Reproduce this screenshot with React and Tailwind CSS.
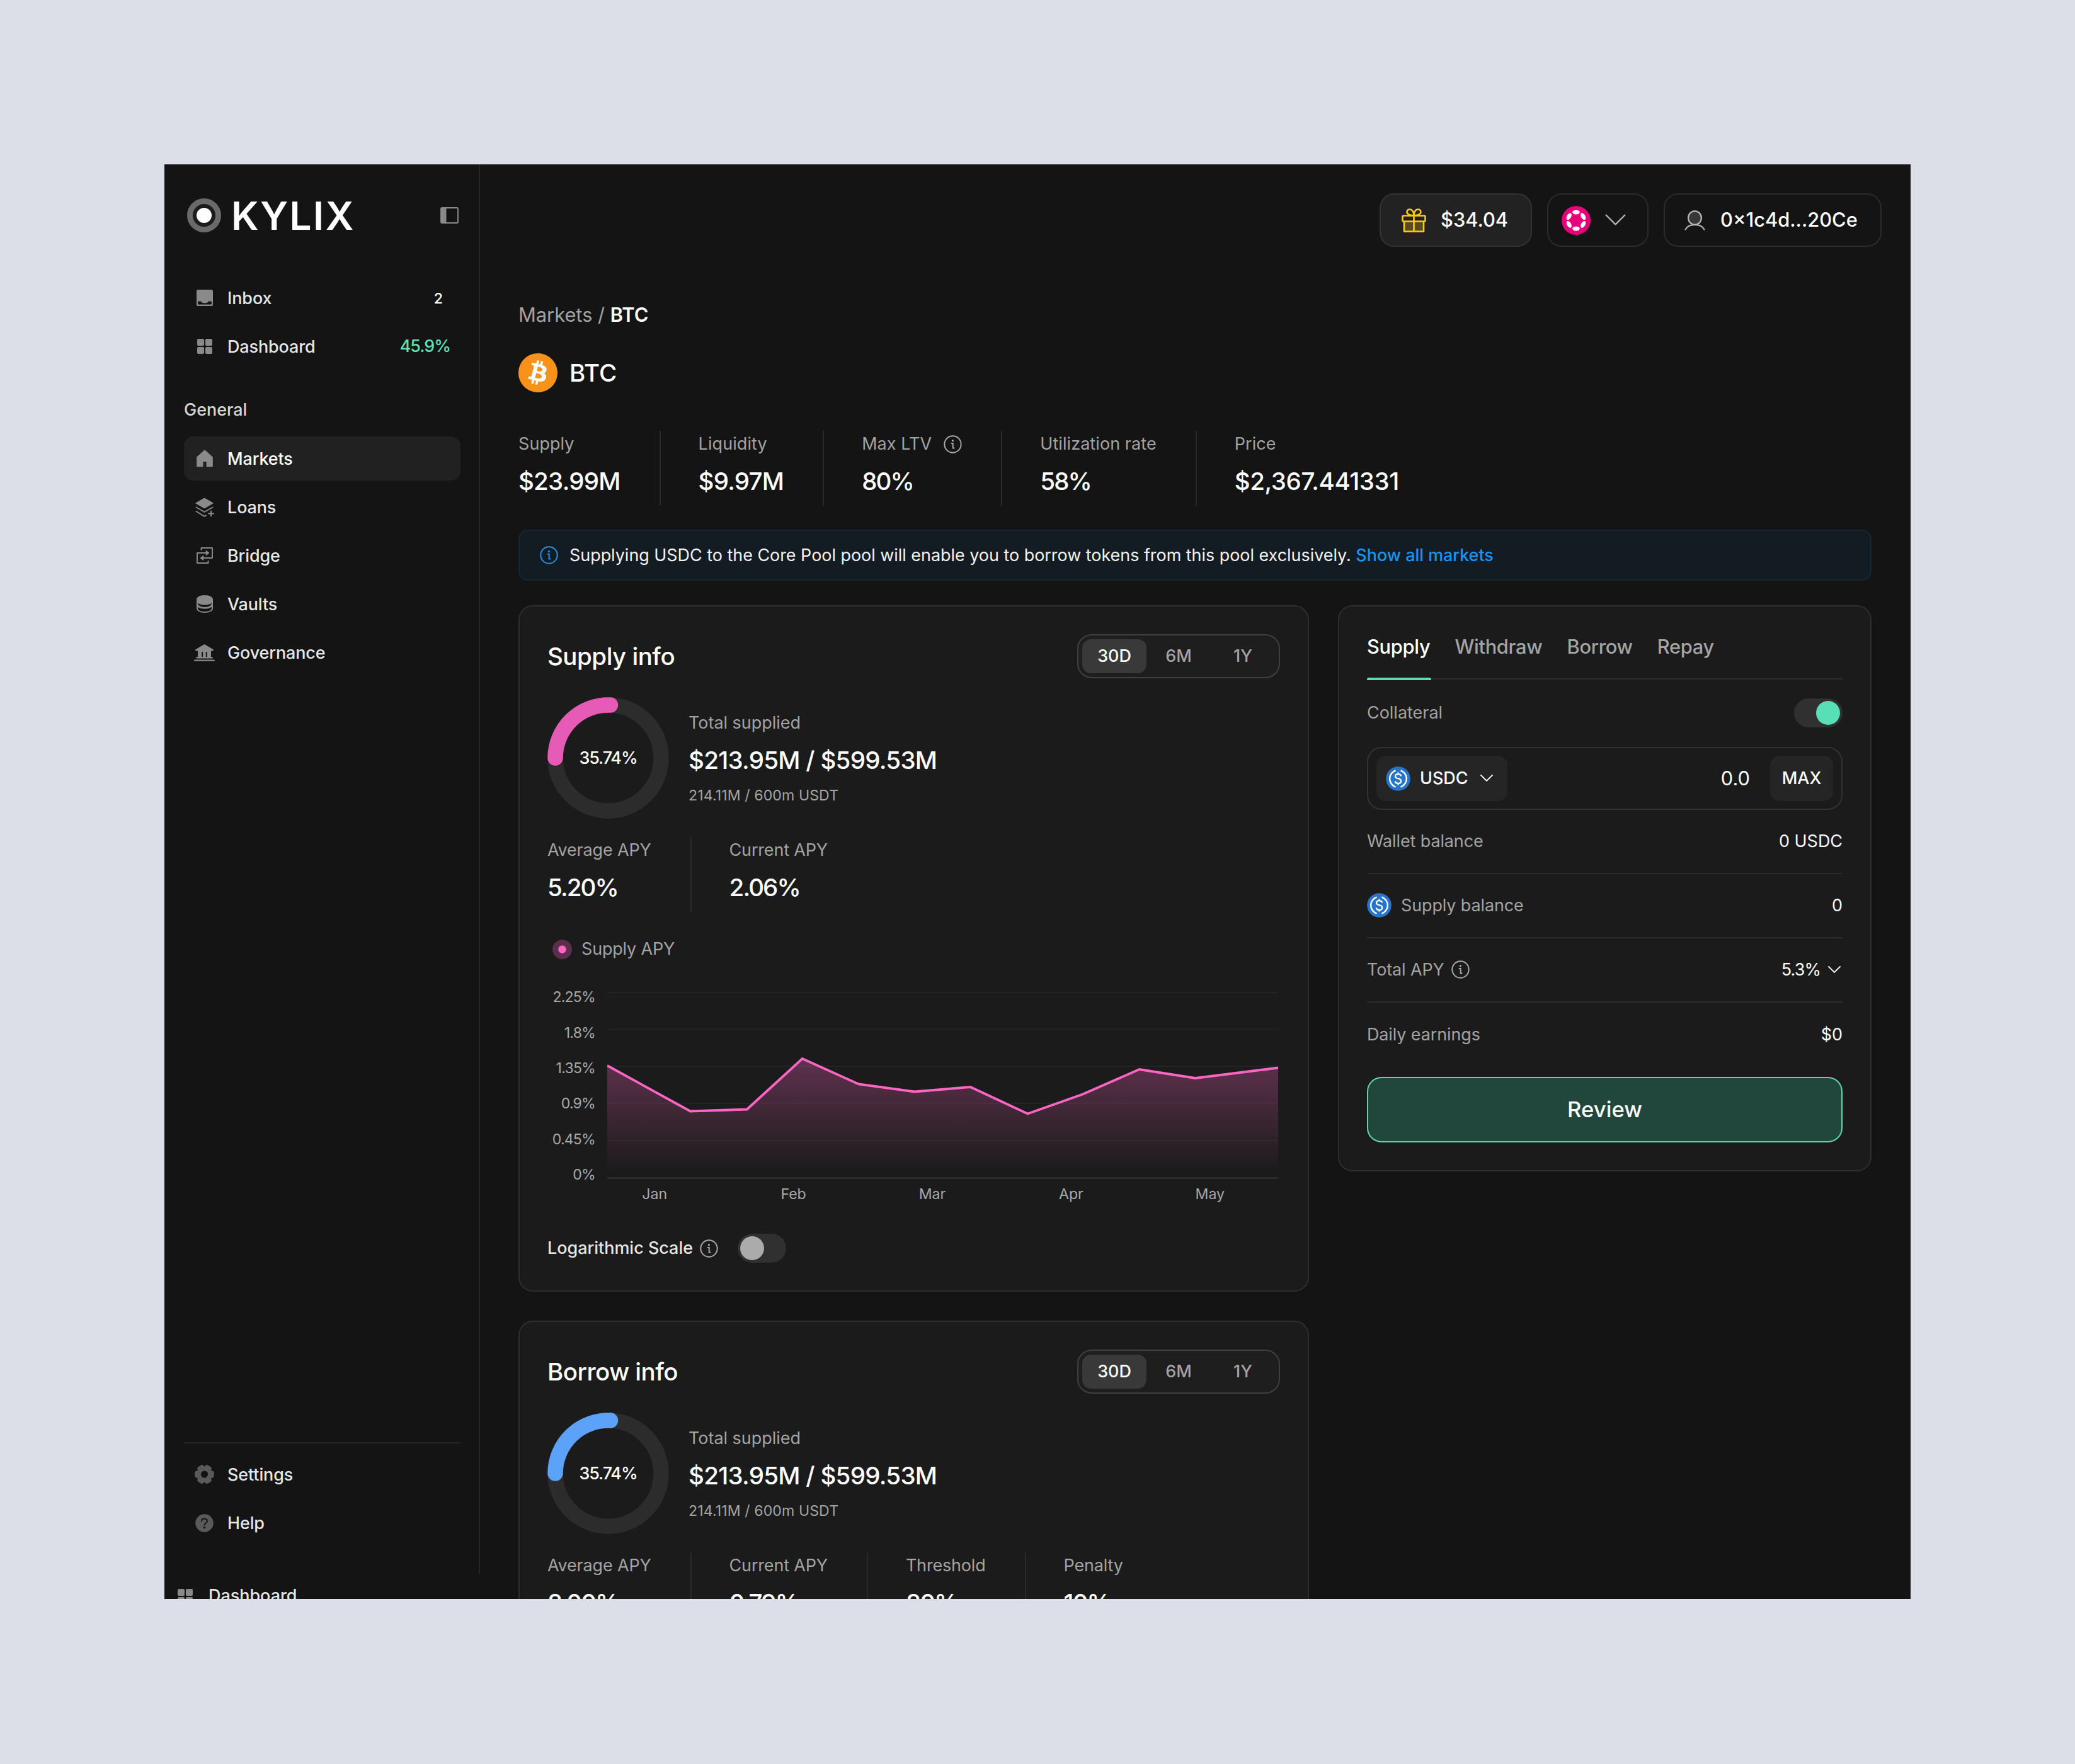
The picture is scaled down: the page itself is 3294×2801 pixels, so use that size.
import { useState } from 'react'
import { SiBitcoin } from 'react-icons/si'

const RANGES = ['30D', '6M', '1Y']

const TABS = ['Supply', 'Withdraw', 'Borrow', 'Repay']

const TOP_NAV = [
  { label: 'Inbox', icon: InboxIcon, extra: <span className="mr-[12px] text-[23.1px] text-white">2</span> },
  { label: 'Dashboard', icon: GridIcon, extra: <span className="tracking-[-1px] text-[#5fe0b7]">45.9%</span> },
]

const GENERAL_NAV = [
  { label: 'Markets', icon: HomeIcon, active: true },
  { label: 'Loans', icon: LayersIcon },
  { label: 'Bridge', icon: BridgeIcon },
  { label: 'Vaults', icon: VaultIcon },
  { label: 'Governance', icon: BankIcon },
]

const FOOTER_NAV = [
  { label: 'Settings', icon: GearIcon },
  { label: 'Help', icon: HelpIcon },
]

const MARKET_STATS = [
  { label: 'Supply', value: '$23.99M' },
  { label: 'Liquidity', value: '$9.97M' },
  { label: 'Max LTV', value: '80%', info: true },
  { label: 'Utilization rate', value: '58%' },
  { label: 'Price', value: '$2,367.441331' },
]

const SUPPLY_STATS = [
  { label: 'Average APY', value: '5.20%' },
  { label: 'Current APY', value: '2.06%' },
]

const BORROW_STATS = [
  { label: 'Average APY', value: '8.00%' },
  { label: 'Current APY', value: '0.79%' },
  { label: 'Threshold', value: '80%' },
  { label: 'Penalty', value: '10%' },
]

const Y_TICKS = ['2.25%', '1.8%', '1.35%', '0.9%', '0.45%', '0%']
const GRID_LINES = [1, 59.5, 118, 177, 236]
const MONTHS = ['Jan', 'Feb', 'Mar', 'Apr', 'May']

const APY_POINTS = [
  [0, 117], [132, 189.5], [222, 186.5], [310, 106], [399.5, 146.5], [488.5, 158.5],
  [577, 151], [668, 193.5], [755.5, 162.5], [845.5, 123], [934.5, 137], [1066, 120.5],
]

function InboxIcon() {
  return (
    <svg width="26" height="26" viewBox="0 0 26 26">
      <rect width="26" height="26" rx="2" fill="#8a8a8a" />
      <path d="M2.2 18.5H7C8 21 10 21.3 13 21.3S18 21 19 18.5H23.8V23.6H2.2Z" fill="#141414" />
    </svg>
  )
}

function GridIcon() {
  return (
    <svg width="24" height="24" viewBox="0 0 24 24" fill="#8a8a8a">
      <rect width="11" height="11" rx="2" />
      <rect x="13" width="11" height="11" rx="2" />
      <rect y="13" width="11" height="11" rx="2" />
      <rect x="13" y="13" width="11" height="11" rx="2" />
    </svg>
  )
}

function HomeIcon() {
  return (
    <svg width="28" height="28" viewBox="0 0 28 28">
      <path d="M14 1 26.2 12V26.6H17.200V18.4H10.800V26.6H1.8V12Z" fill="#8a8a8a" stroke="#8a8a8a" strokeWidth="1.2" strokeLinejoin="round" />
    </svg>
  )
}

function LayersIcon() {
  return (
    <svg width="30" height="31" viewBox="0 0 30 31" fill="none" stroke="#8a8a8a" strokeWidth="2" strokeLinecap="round" strokeLinejoin="round">
      <path d="M14.5 1.5 27.5 9 14.5 16.5 1.5 9Z" fill="#8a8a8a" />
      <path d="M1.5 15.5 14.5 23 27.5 15.5" />
      <path d="M1.5 22 14.5 29.8 17 28.5" />
      <path d="M25 21.5V29.5M21 25.5H29" />
    </svg>
  )
}

function BridgeIcon() {
  return (
    <svg width="26" height="26" viewBox="0 0 26 26" fill="none" stroke="#8a8a8a" strokeWidth="1.9" strokeLinecap="round" strokeLinejoin="round">
      <path d="M7.5 4V1H25V17H10" />
      <path d="M18.5 22V25H1V9H16" />
      <path d="M15.5 5.5 20 9 15.5 12.5ZM10.500 13.500 6 17 10.500 20.500Z" fill="#8a8a8a" strokeWidth="1" />
    </svg>
  )
}

function VaultIcon() {
  return (
    <svg width="26" height="28" viewBox="0 0 26 28">
      <path d="M0 7C0 3 5.500 0 13 0S26 3 26 7V21C26 25 20.500 28 13 28S0 25 0 21Z" fill="#8a8a8a" />
      <path d="M2 12.500C4 14.500 8 15.600 13 15.600S22 14.500 24 12.500C24 16.500 19.500 18.900 13 18.900S2 16.500 2 12.500Z" fill="#141414" />
      <path d="M2 18.500C4 20.600 8 21.700 13 21.700S22 20.600 24 18.500V21C24 24 19.500 26 13 26S2 24 2 21Z" fill="#141414" />
    </svg>
  )
}

function BankIcon() {
  return (
    <svg width="33" height="27" viewBox="0 0 33 27" fill="#8a8a8a">
      <path d="M16.500 0 31 8.500 30.500 10.500H27V20H29.500V22.500H3.500V20H6V10.500H2.500L2 8.500Z" />
      <path d="M12.200 12H14.200V20H12.200ZM18.800 12H20.800V20H18.800Z" fill="#141414" />
      <rect y="24.600" width="33" height="2.200" rx="1" />
    </svg>
  )
}

function GearIcon() {
  return (
    <svg width="31" height="30" viewBox="-15.500 -15 31 30">
      <g fill="#5a5a5a">
        <circle r="12.300" />
        {[0, 60, 120, 180, 240, 300].map(a => (
          <rect key={a} x="5" y="-5.800" width="10.300" height="11.600" rx="4" transform={`rotate(${a})`} />
        ))}
      </g>
      <circle r="5.600" fill="#141414" />
    </svg>
  )
}

function HelpIcon() {
  return (
    <svg width="29" height="29" viewBox="0 0 29 29" fill="none">
      <circle cx="14.500" cy="14.500" r="14.300" fill="#5a5a5a" />
      <path d="M10 11.800C10 9 12 7.500 14.500 7.500S19 9 19 11.500C19 14.500 14.500 14.500 14.500 17.600" stroke="#141414" strokeWidth="2" strokeLinecap="round" />
      <circle cx="14.500" cy="21.500" r="1.700" fill="#141414" />
    </svg>
  )
}

function PanelIcon() {
  return (
    <svg width="29" height="26" viewBox="0 0 29 26">
      <rect x="1" y="1" width="27" height="24" rx="1.500" fill="none" stroke="#8a8a8a" strokeWidth="1.900" />
      <rect x="1" y="1" width="8.500" height="24" fill="#8a8a8a" />
    </svg>
  )
}

function GiftIcon() {
  return (
    <svg width="39" height="38" viewBox="0 0 39 38" fill="none" stroke="#facc15" strokeWidth="2.600" strokeLinejoin="round">
      <path d="M4 19.500H35V36.500H4Z" fill="#facc15" fillOpacity=".25" />
      <rect x="1.500" y="11.500" width="36" height="9" rx="1.500" fill="#222222" />
      <path d="M19.500 11V36.500" />
      <path d="M19.500 11C13 11.500 8.500 9 8.500 5.500 8.500 3 10.500 1.500 13 1.500 17 1.500 19.500 6 19.500 11ZM19.500 11C26 11.500 30.500 9 30.500 5.500 30.500 3 28.500 1.500 26 1.500 22 1.500 19.500 6 19.500 11Z" />
    </svg>
  )
}

function PolkadotIcon() {
  return (
    <svg width="46" height="46" viewBox="-23 -23 46 46">
      <circle r="23" fill="#e6007a" />
      <g fill="#fff">
        <ellipse cy="-13" rx="5.800" ry="3.400" />
        <ellipse cy="13" rx="5.800" ry="3.400" />
        <ellipse cx="-11.200" cy="-6.300" rx="3.300" ry="5.900" transform="rotate(30 -11.200 -6.300)" />
        <ellipse cx="11.200" cy="-6.300" rx="3.300" ry="5.900" transform="rotate(-30 11.200 -6.300)" />
        <ellipse cx="-11.200" cy="6.300" rx="3.300" ry="5.900" transform="rotate(-30 -11.200 6.300)" />
        <ellipse cx="11.200" cy="6.300" rx="3.300" ry="5.900" transform="rotate(30 11.200 6.300)" />
      </g>
    </svg>
  )
}

function UserIcon() {
  return (
    <svg width="33" height="32" viewBox="0 0 33 32" fill="none" stroke="#b5b5b5" strokeWidth="2.200" strokeLinecap="round">
      <ellipse cx="16.500" cy="12" rx="10.400" ry="10.800" fill="#b5b5b5" fillOpacity=".22" />
      <path d="M1.500 30.500C4 25.500 10 22.800 16.500 22.800S29 25.500 31.500 30.500" />
    </svg>
  )
}

function UsdcIcon() {
  return (
    <svg width="39" height="39" viewBox="0 0 39 39" fill="none">
      <circle cx="19.500" cy="19.500" r="19.300" fill="#2775ca" />
      <path d="M15.500 6.500A13.700 13.700 0 0 0 15.500 32.500M23.500 6.500A13.700 13.700 0 0 1 23.500 32.500" stroke="#fff" strokeWidth="2.400" />
      <path d="M24 15.300C23.700 13.200 22 12.200 19.500 12.200 17 12.200 15 13.300 15 15.700 15 20.700 24.200 17.700 24.200 23.200 24.200 25.600 22.300 26.900 19.500 26.900 16.800 26.900 15 25.700 14.800 23.400M19.500 9.500V12.500M19.500 26.500V29.500" stroke="#fff" strokeWidth="2.300" />
    </svg>
  )
}

function InfoIcon({ color = '#a8a8a8' }) {
  return (
    <svg className="shrink-0" width="29" height="29" viewBox="0 0 29 29" fill="none" stroke={color} strokeWidth="2">
      <circle cx="14.500" cy="14.500" r="13.200" />
      <path d="M12.600 13H14.700V20.500H16.600" strokeLinecap="round" />
      <circle cx="14.400" cy="8.700" r="1.600" fill={color} stroke="none" />
    </svg>
  )
}

function Chevron({ width, color = '#ffffff' }) {
  return (
    <svg width={width} height={width * 0.56} viewBox="0 0 32 18" fill="none">
      <path d="M1.500 1.500 16 16 30.500 1.500" stroke={color} strokeWidth={width > 25 ? 2.2 : 3} strokeLinecap="round" strokeLinejoin="round" />
    </svg>
  )
}

function NavItem({ item }) {
  const Icon = item.icon
  return (
    <div className={`flex h-[70px] items-center rounded-[15px] pr-4 pl-4 font-medium ${item.active ? 'bg-[#212121] text-white' : 'text-[#e6e6e6]'}`}>
      <span className="mr-[20px] flex w-[33px] justify-center"><Icon /></span>
      <span className="pt-[2px] tracking-[-0.1px]">{item.label}</span>
      <span className="ml-auto">{item.extra}</span>
    </div>
  )
}

function Sidebar() {
  return (
    <aside className="flex h-[2238px] w-[501px] shrink-0 flex-col border-r-2 border-[#262626] pr-[29px] pl-[31px]">
      <div className="mt-[53px] flex h-[55px] items-center pl-[5px]">
        <svg width="54" height="54" viewBox="0 0 54 54">
          <circle cx="27" cy="27" r="22.500" fill="#1c1c1c" stroke="#6a6a6a" strokeWidth="9" />
          <circle cx="27" cy="27" r="12" fill="#fff" />
        </svg>
        <span className="ml-[16px] pt-[2px] text-[62px] leading-none font-semibold tracking-[2.4px] text-white">KYLIX</span>
        <span className="mr-[3px] ml-auto"><PanelIcon /></span>
      </div>
      <nav className="mt-[69px] flex flex-col gap-[7px]">
        {TOP_NAV.map(item => <NavItem key={item.label} item={item} />)}
      </nav>
      <p className="mt-[44px] h-[44px] leading-[44px] font-medium text-[#d6d6d6]">General</p>
      <nav className="mt-[20px] flex flex-col gap-[7px]">
        {GENERAL_NAV.map(item => <NavItem key={item.label} item={item} />)}
      </nav>
      <nav className="mt-auto mb-[46px] flex flex-col gap-[7px] border-t-2 border-[#262626] pt-[14px]">
        {FOOTER_NAV.map(item => <NavItem key={item.label} item={item} />)}
      </nav>
    </aside>
  )
}

function valueTracking(value) {
  if (value.endsWith('%')) return 'tracking-[-1.9px]'
  return value.length > 8 ? 'tracking-[-0.4px]' : 'tracking-[-0.75px]'
}

function Stats({ items, labelClass = 'tracking-[-0.15px]' }) {
  return (
    <div className="flex h-[119px]">
      {items.map(s => (
        <div key={s.label} className="mr-[60px] border-r-2 border-[#2a2a2a] pr-[62px] last:mr-0 last:border-r-0">
          <p className={`flex h-[43px] items-center gap-[19px] whitespace-nowrap text-[#a3a3a3] ${labelClass}`}>
            {s.label}
            {s.info && <InfoIcon />}
          </p>
          <p className={`mt-2 h-[59px] text-[38.5px] leading-[59px] font-medium whitespace-nowrap text-white ${valueTracking(s.value)}`}>{s.value}</p>
        </div>
      ))}
    </div>
  )
}

function RangePicker() {
  const [range, setRange] = useState('30D')
  return (
    <div className="flex h-[70px] items-center rounded-[23px] border-2 border-[#404040] bg-[#1e1e1e] px-[6px]">
      {RANGES.map(r => (
        <button key={r} onClick={() => setRange(r)}
          className={`h-[54px] w-[102px] rounded-[14px] font-medium ${r === range ? 'bg-[#393939] text-white' : 'text-[#a3a3a3]'}`}>
          {r}
        </button>
      ))}
    </div>
  )
}

function Donut({ color }) {
  return (
    <div className="grid h-[193px] w-[193px] place-items-center">
      <svg className="col-start-1 row-start-1" width="193" height="193" viewBox="-96.500 -96.500 193 193" fill="none">
        <circle r="84" stroke="#2c2c2c" strokeWidth="24.500" />
        <path d="M-84 0A84 84 0 0 1 3.500 -83.900" stroke={color} strokeWidth="24.500" strokeLinecap="round" />
      </svg>
      <span className="col-start-1 row-start-1 pt-[2px] font-medium tracking-[-1.1px] text-white">35.74%</span>
    </div>
  )
}

function ApyChart() {
  const line = APY_POINTS.map(p => p.join(',')).join(' ')
  return (
    <div>
      <div className="flex items-center gap-[15px] pl-2 tracking-[-0.15px] text-[#a3a3a3]">
        <svg width="31" height="31" viewBox="0 0 31 31">
          <circle cx="15.500" cy="15.500" r="15.500" fill="#5a2f4c" />
          <circle cx="15.500" cy="15.500" r="6.200" fill="#ff66c4" />
        </svg>
        Supply APY
      </div>
      <div className="mt-[28px] flex">
        <div className="flex w-[76px] flex-col text-right text-[23.1px] tracking-[-0.8px] text-[#a8a8a8]">
          {Y_TICKS.map(t => <span key={t} className="h-[56.300px] leading-[56.300px]">{t}</span>)}
        </div>
        <svg className="mt-[20px] ml-[19px]" width="1065" height="298" viewBox="0 0 1066 298" preserveAspectRatio="none">
          <defs>
            <linearGradient id="apy" x1="0" y1="106" x2="0" y2="285" gradientUnits="userSpaceOnUse">
              <stop offset="0" stopColor="#ff66c4" stopOpacity=".3" />
              <stop offset="1" stopColor="#ff66c4" stopOpacity="0" />
            </linearGradient>
          </defs>
          {GRID_LINES.map(y => <path key={y} d={`M0 ${y}H1066`} stroke="#fff" strokeOpacity=".045" strokeWidth="2" />)}
          <polygon points={`0,295 ${line} 1066,295`} fill="url(#apy)" />
          <path d="M0 295.500H1066" stroke="#303030" strokeWidth="2.500" />
          <polyline points={line} fill="none" stroke="#ff66c4" strokeWidth="3.800" />
        </svg>
      </div>
      <div className="-mt-[17px] ml-[60px] flex w-[1102px] text-[23.1px] text-[#a8a8a8]">
        {MONTHS.map(m => <span key={m} className="flex-1 text-center leading-[40px]">{m}</span>)}
      </div>
    </div>
  )
}

function InfoCard({ title, color, stats, children }) {
  return (
    <section className="w-[1255px] rounded-[23px] border-2 border-[#2e2e2e] bg-[#1b1b1b] p-[44px]">
      <div className="flex items-center justify-between">
        <h2 className="text-[38.5px] leading-none font-medium tracking-[-0.5px] text-white">{title}</h2>
        <RangePicker />
      </div>
      <div className="mt-[30px] flex items-center gap-[31px]">
        <Donut color={color} />
        <div className="text-[#a3a3a3]">
          <p className="leading-[56px]">Total supplied</p>
          <p className="text-[38.5px] leading-[62px] font-medium tracking-[-0.7px] text-white">$213.95M / $599.53M</p>
          <p className="text-[23.1px] leading-[50px] tracking-[0.1px]">214.11M / 600m USDT</p>
        </div>
      </div>
      <div className="mt-[29px]"><Stats items={stats} /></div>
      {children}
    </section>
  )
}

function Row({ label, value }) {
  return (
    <div className="flex h-[102px] items-center justify-between border-b-2 border-[#2c2c2c] last:border-b-0">
      <span className="flex items-center gap-[11px] tracking-[-0.1px] text-[#a3a3a3]">{label}</span>
      <span className="flex items-center gap-[12px] text-white">{value}</span>
    </div>
  )
}

function ActionPanel() {
  const [tab, setTab] = useState('Supply')
  return (
    <section className="h-[899px] w-[847px] rounded-[23px] border-2 border-[#2e2e2e] bg-[#1b1b1b] px-[44px]">
      <div className="mt-[22px] flex h-[94px] gap-[39px] border-b-2 border-[#2c2c2c] text-[30.8px] tracking-[-0.3px]">
        {TABS.map(t => (
          <button key={t} onClick={() => setTab(t)} className={`relative pb-[8px] font-medium ${t === tab ? 'text-white' : 'text-[#a3a3a3]'}`}>
            {t}
            {t === tab && <span className="absolute -bottom-[3px] left-0 h-1 w-[102px] rounded-t-[3px] bg-[#5fdcb4]" />}
          </button>
        ))}
      </div>
      <div className="mt-[30px] flex h-[46px] items-center justify-between text-[#a3a3a3]">
        Collateral
        <span className="flex h-[46px] w-[77px] items-center justify-end rounded-full bg-[#303030] pr-1">
          <span className="h-[38px] w-[38px] rounded-full bg-[#58dfb5]" />
        </span>
      </div>
      <div className="mt-[31px] flex h-[100px] items-center rounded-[23px] border-2 border-[#333333] px-[13px] text-white">
        <button className="flex h-[72px] w-[208px] items-center rounded-[15px] bg-[#252525] pl-[15px] font-medium">
          <UsdcIcon />
          <span className="mr-[19px] ml-[15px]">USDC</span>
          <Chevron width={20} />
        </button>
        <span className="mr-[32px] ml-auto text-[30.8px]">0.0</span>
        <button className="h-[72px] w-[100px] rounded-[15px] bg-[#252525] font-medium">MAX</button>
      </div>
      <div>
        <Row label="Wallet balance" value="0 USDC" />
        <Row label={<><UsdcIcon /><span className="ml-[4px]">Supply balance</span></>} value="0" />
        <Row label={<>Total APY <InfoIcon /></>} value={<><span className="tracking-[-0.9px]">5.3%</span><span className="mr-[3px]"><Chevron width={20} /></span></>} />
        <Row label="Daily earnings" value="$0" />
      </div>
      <button className="mt-[16px] h-[104px] w-full rounded-[23px] border-2 border-[#5cd8ad] bg-[#21463b] text-[34.65px] font-medium text-white">Review</button>
    </section>
  )
}

export default function App() {
  return (
    <div className="h-[2801px] w-[3294px] overflow-hidden bg-[#dcdfe7] p-[261px] font-['Inter','Liberation_Sans',sans-serif] text-[26.95px]">
      <div className="flex h-[2278px] w-[2772px] overflow-hidden bg-[#141414]">
        <div className="flex w-[501px] shrink-0 flex-col">
          <Sidebar />
          <div className="mt-[1px] flex h-[69px] shrink-0 items-center pl-[21px] font-medium text-[#e6e6e6]">
            <GridIcon />
            <span className="ml-[25px]">Dashboard</span>
          </div>
        </div>
        <main className="flex min-w-0 flex-1 flex-col pr-[62px] pl-[61px]">
          <header className="mt-[46px] -mr-[16px] flex h-[85px] shrink-0 justify-end gap-[24px] text-[30.8px] font-medium text-white">
            <div className="flex w-[242px] items-center gap-[23px] rounded-[23px] border-2 border-[#333333] bg-[#222222] pl-[33px]">
              <GiftIcon />
              $34.04
            </div>
            <div className="flex w-[161px] items-center gap-[23px] rounded-[23px] border-2 border-[#2b2b2b] pl-[21px]">
              <PolkadotIcon />
              <Chevron width={33} color="#b8b8b8" />
            </div>
            <div className="flex w-[346px] items-center gap-[24px] rounded-[23px] border-2 border-[#2b2b2b] pl-[31px]">
              <UserIcon />
              0×1c4d...20Ce
            </div>
          </header>
          <p className="mt-[84px] shrink-0 text-[30.8px] leading-[48px] text-[#a3a3a3]">
            Markets / <span className="font-semibold text-white">BTC</span>
          </p>
          <div className="mt-[37px] flex h-[62px] shrink-0 items-center gap-[19px] text-[38.5px] font-medium text-white">
            <span className="rounded-full bg-[radial-gradient(circle,#fff_65%,transparent_66%)]">
              <SiBitcoin className="h-[62px] w-[62px] text-[#f7931a]" />
            </span>
            <span className="pt-[2px]">BTC</span>
          </div>
          <div className="mt-[61px] shrink-0"><Stats items={MARKET_STATS} labelClass="tracking-[0.1px]" /></div>
          <div className="mt-[38px] flex h-[81px] shrink-0 items-center rounded-[15px] border-2 border-[#172733] bg-[#141c23] pl-[32px] text-[#f2f2f2]">
            <InfoIcon color="#1c93f3" />
            <p className="ml-[18px] pt-[2px] tracking-[-0.02px] whitespace-nowrap">
              Supplying USDC to the Core Pool pool will enable you to borrow tokens from this pool exclusively.{' '}
              <span className="font-medium text-[#1c93f3]">Show all markets</span>
            </p>
          </div>
          <div className="mt-[39px] flex shrink-0 items-start justify-between">
            <div className="flex flex-col gap-[46px]">
              <InfoCard title="Supply info" color="#e55bb5" stats={SUPPLY_STATS}>
                <div className="mt-[39px]"><ApyChart /></div>
                <div className="mt-[43px] flex h-[46px] items-center font-medium text-[#e6e6e6]">
                  Logarithmic Scale
                  <span className="ml-[11px]"><InfoIcon /></span>
                  <span className="ml-[31px] flex h-[46px] w-[77px] items-center rounded-full bg-[#303030] pl-1">
                    <span className="h-[38px] w-[38px] rounded-full bg-[#ababab]" />
                  </span>
                </div>
              </InfoCard>
              <InfoCard title="Borrow info" color="#5ba2f8" stats={BORROW_STATS} />
            </div>
            <ActionPanel />
          </div>
        </main>
      </div>
    </div>
  )
}
